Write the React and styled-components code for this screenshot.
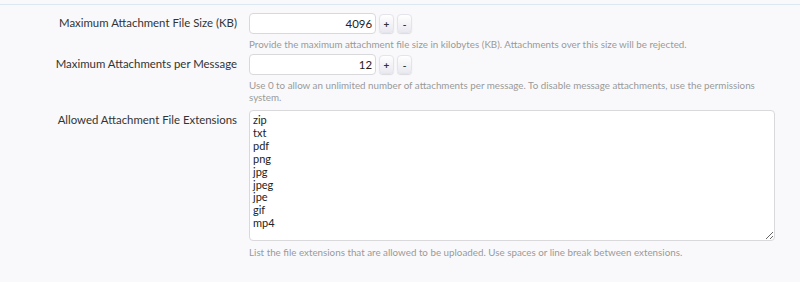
import React from 'react';
import styled, { createGlobalStyle } from 'styled-components';

const GlobalStyle = createGlobalStyle`
  html, body {
    margin: 0;
    padding: 0;
    background: #f9f9fb;
  }
  body {
    font-family: Lato, "Liberation Sans", sans-serif;
    color: #333;
  }
`;

const Page = styled('div')`
  width: 800px;
  height: 282px;
  overflow: hidden;
  background: #f9f9fb;
`;

const TopRule = styled('div')`
  height: 4px;
  border-bottom: 1px solid #dbe7f3;
`;

const Form = styled('dl')`
  margin: 0;
  padding: 8px 25px 0 0;
  display: grid;
  grid-template-columns: 237px 1fr;
  column-gap: 12px;
  row-gap: 4px;
`;

const Label = styled('dt')`
  margin: ${p => (p.$offset ? `${p.$offset}px 0 0` : 0)};
  text-align: right;
  font-size: 11.4px;
  line-height: 20px;
  color: #333;
`;

const Field = styled('dd')`
  margin: 0;
`;

const SpinRow = styled('div')`
  display: flex;
  align-items: center;
  gap: 3px;
  height: 21px;
`;

const NumberBox = styled('input')`
  box-sizing: border-box;
  width: 127px;
  height: 21px;
  border: 1px solid #d9d9dc;
  border-radius: 4px;
  background: #fff;
  text-align: right;
  padding: 0 3px;
  font: 11.4px Lato, "Liberation Sans", sans-serif;
  color: #222;
  outline: none;
`;

const SpinButton = styled('button')`
  box-sizing: border-box;
  width: 15px;
  height: 19px;
  padding: 0;
  border: 1px solid #e4e4ec;
  border-radius: 4px;
  background: linear-gradient(#ffffff, #e9e9f0);
  box-shadow: 0 1px 1px rgba(0, 0, 0, 0.12);
  font: bold 10px Lato, "Liberation Sans", sans-serif;
  color: #333;
  line-height: 16px;
`;

const Hint = styled('p')`
  margin: 4px 0 0;
  font-size: 9.8px;
  line-height: 12px;
  color: #9a9a9a;
`;

const TextBox = styled('textarea')`
  box-sizing: border-box;
  display: block;
  width: 100%;
  height: 131px;
  margin-top: 3px;
  border: 1px solid #d9d9dc;
  border-radius: 4px;
  background: #fff;
  padding: 3px 3px;
  font: 11px Lato, "Liberation Sans", sans-serif;
  line-height: 12.9px;
  color: #222;
  resize: vertical;
  outline: none;

  & + p {
    margin-top: 5px;
  }
`;

const Spinner = ({ value }) => (
  <SpinRow>
    <NumberBox defaultValue={value} />
    <SpinButton>+</SpinButton>
    <SpinButton>-</SpinButton>
  </SpinRow>
);

const extensions = ['zip', 'txt', 'pdf', 'png', 'jpg', 'jpeg', 'jpe', 'gif', 'mp4'];

const App = () => (
  <Page>
    <GlobalStyle />
    <TopRule />
    <Form>
      <Label>Maximum Attachment File Size (KB)</Label>
      <Field>
        <Spinner value="4096" />
        <Hint>Provide the maximum attachment file size in kilobytes (KB). Attachments over this size will be rejected.</Hint>
      </Field>

      <Label>Maximum Attachments per Message</Label>
      <Field>
        <Spinner value="12" />
        <Hint>Use 0 to allow an unlimited number of attachments per message. To disable message attachments, use the permissions system.</Hint>
      </Field>

      <Label $offset={3}>Allowed Attachment File Extensions</Label>
      <Field>
        <TextBox defaultValue={extensions.join('\n')} />
        <Hint>List the file extensions that are allowed to be uploaded. Use spaces or line break between extensions.</Hint>
      </Field>
    </Form>
  </Page>
);

export default App;
